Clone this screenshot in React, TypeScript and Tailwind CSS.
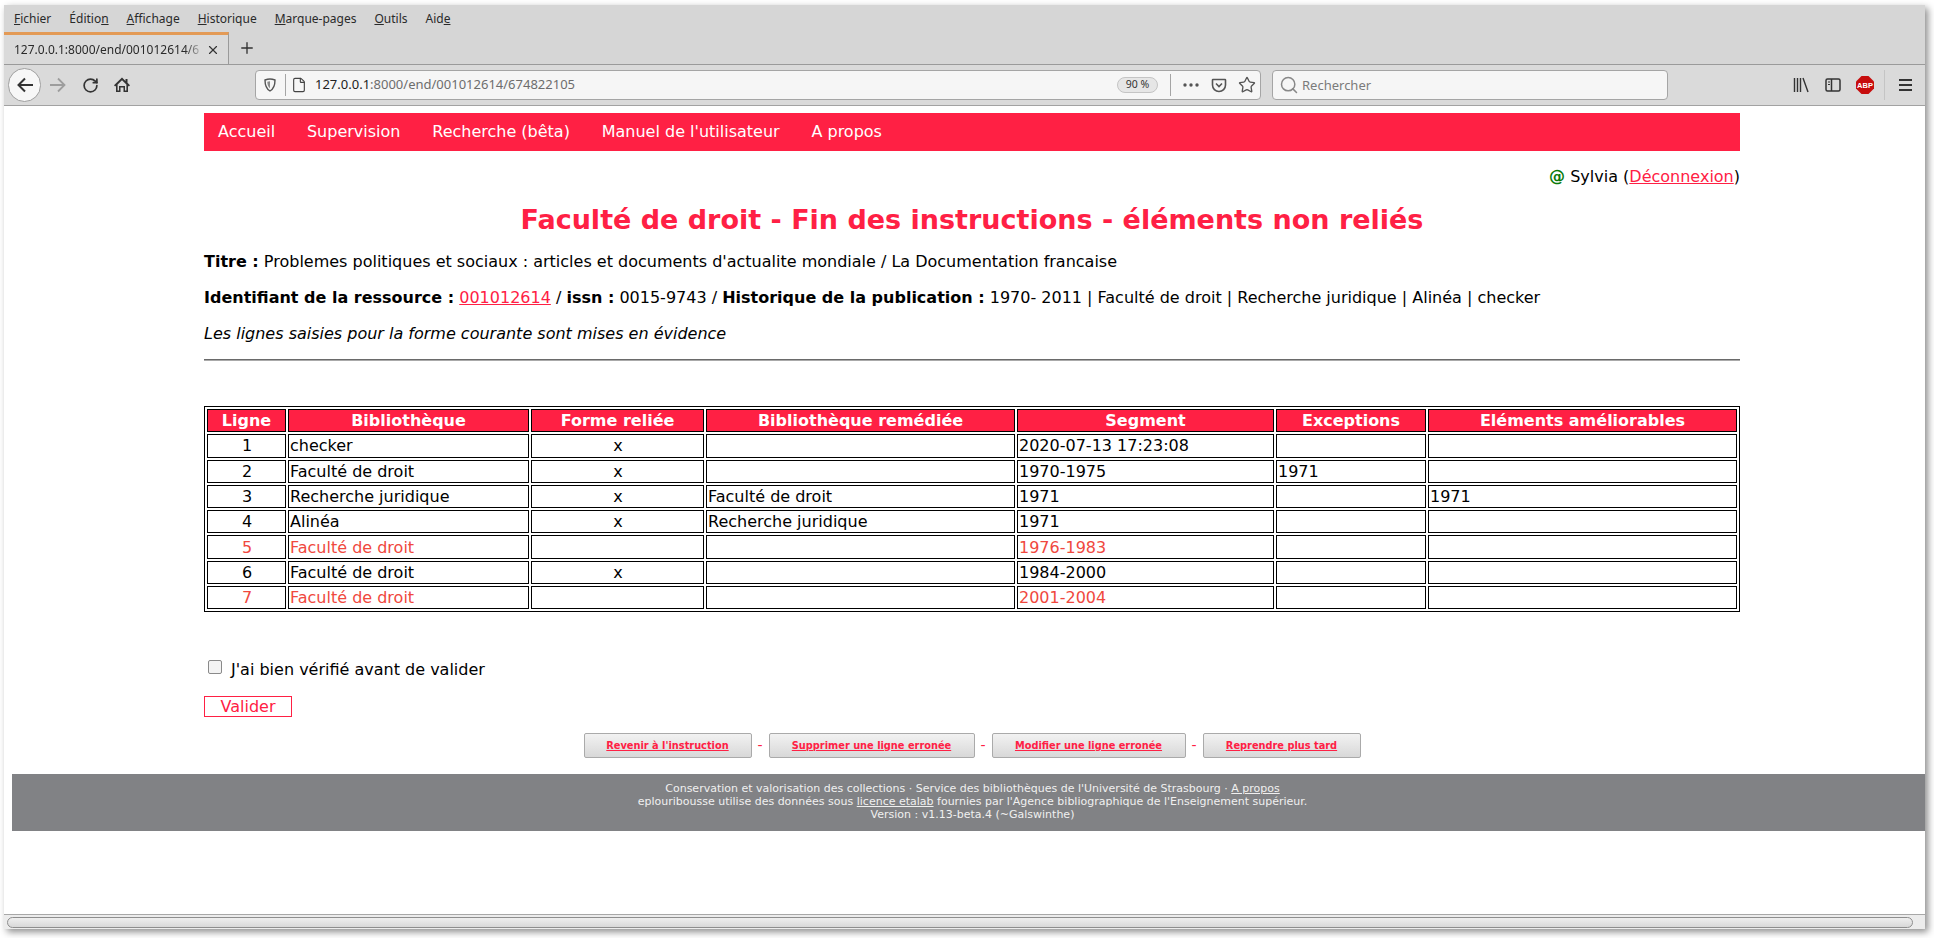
import { RotateCw, X, Plus, Search, Star, File } from "lucide-react";

const rows = [
  { n: 1, lib: "checker", linked: true, fixed: "", seg: "2020-07-13 17:23:08", exc: "", better: "" },
  { n: 2, lib: "Faculté de droit", linked: true, fixed: "", seg: "1970-1975", exc: "1971", better: "" },
  { n: 3, lib: "Recherche juridique", linked: true, fixed: "Faculté de droit", seg: "1971", exc: "", better: "1971" },
  { n: 4, lib: "Alinéa", linked: true, fixed: "Recherche juridique", seg: "1971", exc: "", better: "" },
  { n: 5, lib: "Faculté de droit", linked: false, fixed: "", seg: "1976-1983", exc: "", better: "" },
  { n: 6, lib: "Faculté de droit", linked: true, fixed: "", seg: "1984-2000", exc: "", better: "" },
  { n: 7, lib: "Faculté de droit", linked: false, fixed: "", seg: "2001-2004", exc: "", better: "" },
];

const heads = [
  { label: "Ligne", w: "w-[79px]" },
  { label: "Bibliothèque", w: "w-[241px]" },
  { label: "Forme reliée", w: "w-[173px]" },
  { label: "Bibliothèque remédiée", w: "w-[309px]" },
  { label: "Segment", w: "w-[257px]" },
  { label: "Exceptions", w: "w-[150px]" },
  { label: "Eléments améliorables", w: "w-[309px]" },
];

const menus = [
  { pre: "", u: "F", post: "ichier" },
  { pre: "Éditio", u: "n", post: "" },
  { pre: "", u: "A", post: "ffichage" },
  { pre: "", u: "H", post: "istorique" },
  { pre: "", u: "M", post: "arque-pages" },
  { pre: "", u: "O", post: "utils" },
  { pre: "Aid", u: "e", post: "" },
];

const actions = [
  { label: "Revenir à l'instruction", w: "w-[168px]" },
  { label: "Supprimer une ligne erronée", w: "w-[206px]" },
  { label: "Modifier une ligne erronée", w: "w-[194px]" },
  { label: "Reprendre plus tard", w: "w-[158px]" },
];

function BrowserChrome() {
  return (
    <div className="font-['Noto_Sans',sans-serif] text-[#2a2a2a]">
      {/* Menu bar */}
      <div className="flex h-[27px] items-center gap-[18px] bg-[#d6d6d6] pl-[10px] text-[12px]">
        {menus.map((m) => (
          <span key={m.u + m.pre}>
            {m.pre}
            <span className="underline">{m.u}</span>
            {m.post}
          </span>
        ))}
      </div>

      {/* Tabs */}
      <div className="flex h-[33px] items-stretch border-b border-[#9a9a9a] bg-[#d6d6d6]">
        <div className="flex w-[225px] items-center border-t-[3px] border-r border-t-[#e39a56] border-r-[#9a9a9a] bg-[#dadada] pl-[10px] text-[12px]">
          <span className="w-[190px] overflow-hidden whitespace-nowrap [mask-image:linear-gradient(to_right,black_90%,transparent)]">
            127.0.0.1:8000/end/001012614/6
          </span>
          <X size={14} strokeWidth={2} className="ml-[2px] shrink-0 text-[#333]" />
        </div>
        <div className="ml-[9px] flex w-[18px] items-center justify-center">
          <Plus size={18} strokeWidth={1.8} className="text-[#333]" />
        </div>
      </div>

      {/* Toolbar */}
      <div className="flex h-[41px] items-center border-b border-[#a2a2a2] bg-[#dadada] pl-[4px]">
        <div className="flex h-[34px] w-[33px] shrink-0 items-center justify-center rounded-full border border-[#9f9f9f] bg-[#f7f7f7]">
          <svg width="16" height="16" viewBox="0 0 16 16" fill="none" stroke="#333" strokeWidth="2">
            <path d="M1 8h15M8 1.5 1.5 8 8 14.5" />
          </svg>
        </div>
        <svg width="16" height="16" viewBox="0 0 16 16" className="ml-[9px] shrink-0" fill="none" stroke="#9d9d9d" strokeWidth="1.8">
          <path d="M0 8h15M8 1.5 14.5 8 8 14.5" />
        </svg>
        <RotateCw size={17} strokeWidth={2.4} className="ml-[16px] shrink-0 text-[#333]" />
        <svg width="18" height="18" viewBox="0 0 18 18" className="ml-[14px] shrink-0">
          <path d="M9 1.5 1 9.2l1.2 1.2L3 9.7V16h4.5v-4.5h3V16H15V9.7l.8.7L17 9.2l-2.5-2.4V3h-2v1.9z" fill="#333" />
          <path d="M9 4.2 4.6 8.4V14.4h1.4V10h6v4.4h1.4V8.4z" fill="#dadada" />
        </svg>

        {/* URL bar */}
        <div className="ml-[124px] flex h-[30px] w-[1006px] shrink-0 items-center rounded-[4px] border border-[#a5a5a5] bg-[#f6f6f6] text-[13px]">
          <svg width="12" height="14" viewBox="0 0 12 14" className="ml-[8px]">
            <path d="M6 1C4.3 1 2.6 1.4 1 2c0 4.5.7 8.6 5 11 4.3-2.4 5-6.500 5-11-1.600-.6-3.300-1-5-1z" fill="none" stroke="#555" strokeWidth="1.4" />
            <path d="M6 3.300v7c-2-1.300-2.600-3.600-2.700-6.500.9-.3 1.800-.5 2.700-.5z" fill="#8a8a8a" />
          </svg>
          <div className="ml-[9px] h-[22px] w-px bg-[#a5a5a5]" />
          <File size={16} strokeWidth={1.7} className="ml-[5px] text-[#444]" />
          <span className="ml-[8px] text-[#222]">
            127.0.0.1<span className="text-[#6d6d6d]">:8000/end/001012614/674822105</span>
          </span>
          <div className="ml-auto flex h-[16px] w-[41px] items-center justify-center rounded-full border border-[#c4c4c4] bg-[#e6e6e6] text-[10.5px] text-[#333]">
            90 %
          </div>
          <div className="ml-[12px] h-[22px] w-px bg-[#a5a5a5]" />
          <svg width="16" height="4" viewBox="0 0 16 4" className="ml-[12px]" fill="#555">
            <circle cx="2" cy="2" r="1.700" />
            <circle cx="8" cy="2" r="1.700" />
            <circle cx="14" cy="2" r="1.700" />
          </svg>
          <svg width="16" height="16" viewBox="0 0 16 16" className="ml-[12px]" fill="none" stroke="#555" strokeWidth="1.6">
            <path d="M2 2.500h12a.5.5 0 0 1 .5.5v5a6.500 6.500 0 0 1-13 0V3a.5.5 0 0 1 .5-.5z" />
            <path d="M5 6.500l3 3 3-3" />
          </svg>
          <Star size={18} strokeWidth={1.8} className="ml-[11px] mr-[4px] text-[#555]" />
        </div>

        {/* Search bar */}
        <div className="ml-[11px] flex h-[30px] w-[396px] shrink-0 items-center rounded-[4px] border border-[#a5a5a5] bg-[#f6f6f6] text-[13px] text-[#7b7b7b]">
          <Search size={20} strokeWidth={1.8} className="ml-[6px] text-[#888]" />
          <span className="ml-[3px] mt-px">Rechercher</span>
        </div>

        {/* Right icons */}
        <svg width="16" height="16" viewBox="0 0 16 16" className="ml-[125px] shrink-0" fill="none" stroke="#333" strokeWidth="1.4">
          <path d="M1.500 1v14M4.500 1v14M7.500 1v14M10 1l5 14" />
        </svg>
        <svg width="16" height="16" viewBox="0 0 16 16" className="ml-[16px] shrink-0" fill="none" stroke="#333" strokeWidth="1.5">
          <rect x="1" y="2" width="14" height="12" rx="1.500" />
          <path d="M6.500 2v12" />
          <path d="M3 5h2M3 7.500h2" strokeWidth="1.200" />
        </svg>
        <svg width="18" height="18" viewBox="0 0 18 18" className="ml-[15px] shrink-0">
          <path d="M5.500 0h7L18 5.500v7L12.500 18h-7L0 12.500v-7z" fill="#c70d0d" />
          <text x="9" y="11.500" textAnchor="middle" fontSize="7.500" fontWeight="700" fill="#fff" fontFamily="Liberation Sans">ABP</text>
        </svg>
        <div className="ml-[10px] h-[30px] w-px shrink-0 bg-[#c4c4c4]" />
        <svg width="14" height="14" viewBox="0 0 14 14" className="ml-[14px] shrink-0" fill="#333">
          <rect x="0" y="1" width="13" height="2" />
          <rect x="0" y="6" width="13" height="2" />
          <rect x="0" y="11" width="13" height="2" />
        </svg>
      </div>
    </div>
  );
}

function Cell({ children, center, tone }: { children?: React.ReactNode; center?: boolean; tone: string }) {
  return (
    <td className={`h-[23.3px] border border-black p-0 pl-px text-[16px] leading-[19px] ${tone} ${center ? "text-center" : "text-left"}`}>
      {children}
    </td>
  );
}

function DataTable() {
  return (
    <table className="mt-[45px] w-full table-fixed border-separate border-spacing-[2px] border border-black">
      <thead>
        <tr>
          {heads.map((h) => (
            <th
              key={h.label}
              className={`${h.w} h-[23.3px] border border-black bg-[#ff2044] p-0 text-center text-[16px] font-bold leading-[19px] text-white`}
            >
              {h.label}
            </th>
          ))}
        </tr>
      </thead>
      <tbody>
        {rows.map((r) => {
          const tone = r.linked ? "text-black" : "text-[#f0483e]";
          return (
            <tr key={r.n}>
              <Cell center tone={tone}>{r.n}</Cell>
              <Cell tone={tone}>{r.lib}</Cell>
              <Cell center tone={tone}>{r.linked ? "x" : ""}</Cell>
              <Cell tone={tone}>{r.fixed}</Cell>
              <Cell tone={tone}>{r.seg}</Cell>
              <Cell tone={tone}>{r.exc}</Cell>
              <Cell tone={tone}>{r.better}</Cell>
            </tr>
          );
        })}
      </tbody>
    </table>
  );
}

function Page() {
  return (
    <div className="flex-1 overflow-hidden bg-white font-['DejaVu_Sans',sans-serif] text-[16px] text-black">
      <div className="ml-[200px] w-[1536px] pt-[7px]">
        <nav className="flex h-[38px] items-center gap-[31.8px] bg-[#ff2044] pl-[14px] text-white">
          <span>Accueil</span>
          <span>Supervision</span>
          <span>Recherche (bêta)</span>
          <span>Manuel de l'utilisateur</span>
          <span>A propos</span>
        </nav>

        <p className="mt-[16px] text-right leading-[19px]">
          <span className="font-bold text-[#0a7a0a]">@</span> Sylvia (
          <span className="text-[#ff2044] underline">Déconnexion</span>)
        </p>

        <h1 className="mt-[17px] text-center text-[27px] font-bold leading-[34px] text-[#ff2044]">
          Faculté de droit - Fin des instructions - éléments non reliés
        </h1>

        <p className="mt-[15px] leading-[19px]">
          <b>Titre :</b> Problemes politiques et sociaux : articles et documents d'actualite mondiale / La Documentation francaise
        </p>
        <p className="mt-[17px] leading-[19px]">
          <b>Identifiant de la ressource :</b> <span className="text-[#ff2044] underline">001012614</span> / <b>issn :</b> 0015-9743 /{" "}
          <b>Historique de la publication :</b> 1970- 2011 | Faculté de droit | Recherche juridique | Alinéa | checker
        </p>
        <p className="mt-[17px] italic leading-[19px]">Les lignes saisies pour la forme courante sont mises en évidence</p>
        <hr className="mt-[16px] border-t border-b border-t-[#6a6a6a] border-b-[#aaa]" />

        <DataTable />

        <label className="mt-[48px] flex items-center leading-[19px]">
          <span className="ml-[4px] mt-[-5px] h-[14px] w-[14px] rounded-[2px] border border-[#8a8a8a] bg-[#f3f3f3]" />
          <span className="ml-[9px]">J'ai bien vérifié avant de valider</span>
        </label>

        <div className="mt-[17px] flex h-[21px] w-[88px] items-center justify-center border border-[#ff2044] text-[#ff2044]">
          Valider
        </div>

        <div className="mt-[16px] flex items-center justify-center text-[9.8px] font-bold">
          {actions.map((a, i) => (
            <div key={a.label} className="flex items-center">
              {i > 0 && <span className="w-[17px] text-center text-[14px] font-normal text-[#ff2044]">-</span>}
              <div className={`${a.w} flex h-[25px] items-center justify-center rounded-[2px] border border-[#aaa] bg-gradient-to-b from-[#f2f2f2] to-[#d8d8d8] text-[#ff2044] underline`}>
                {a.label}
              </div>
            </div>
          ))}
        </div>
      </div>

      <footer className="ml-[8px] mt-[16px] flex h-[57px] flex-col items-center justify-center bg-[#818285] pb-[2px] pl-[8px] text-[11px] leading-[13px] text-[#f0f0f0]">
        <div>
          Conservation et valorisation des collections · Service des bibliothèques de l'Université de Strasbourg · <span className="underline">A propos</span>
        </div>
        <div>
          eplouribousse utilise des données sous <span className="underline">licence etalab</span> fournies par l'Agence bibliographique de l'Enseignement supérieur.
        </div>
        <div>Version : v1.13-beta.4 (~Galswinthe)</div>
      </footer>
    </div>
  );
}

export default function App() {
  return (
    <div className="h-[938px] w-[1934px] overflow-hidden bg-white pt-[5px] pl-[4px]">
      <div className="flex h-[924px] w-[1921px] flex-col bg-white shadow-[3px_3px_7px_rgba(0,0,0,0.45)]">
        <BrowserChrome />
        <Page />
        {/* Horizontal scrollbar */}
        <div className="flex h-[15px] items-center border-t border-[#a8a8a8] bg-[#ececec] pl-[3px]">
          <div className="h-[11px] w-[1906px] rounded-full border border-[#8e8e8e] bg-gradient-to-b from-[#efefef] to-[#d8d8d8]" />
        </div>
      </div>
    </div>
  );
}
